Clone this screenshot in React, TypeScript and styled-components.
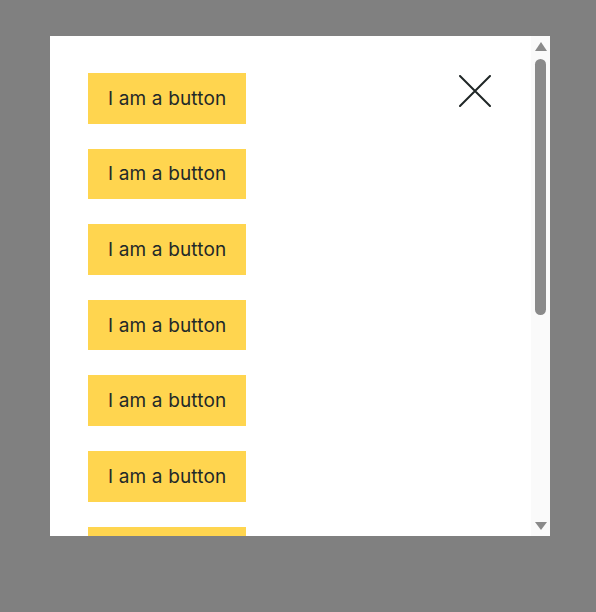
import React from 'react';
import styled, { createGlobalStyle } from 'styled-components';

const GlobalStyle = createGlobalStyle`
  html, body {
    margin: 0;
    padding: 0;
  }
  body {
    font-family: Inter, 'Noto Sans', sans-serif;
  }
`;

const Backdrop = styled.div`
  width: 100%;
  height: 100vh;
  background-color: #808080;
  padding: 36px 0 0 50px;
  box-sizing: border-box;
`;

const Modal = styled.div`
  display: flex;
  width: 500px;
  height: 500px;
  background-color: #fff;
`;

const Body = styled.div`
  position: relative;
  flex: 1;
  overflow: hidden;
`;

const Content = styled.div`
  display: flex;
  flex-direction: column;
  align-items: flex-start;
  gap: 25px;
  padding: 37px 38px;
`;

const Button = styled.button`
  display: flex;
  align-items: center;
  height: 50.6px;
  padding: 0 20px;
  border: none;
  border-radius: 0;
  background-color: #ffd54f;
  color: #1f2929;
  font-family: Inter, 'Noto Sans', sans-serif;
  font-size: 19px;
  letter-spacing: 0.15px;
  cursor: pointer;
`;

const Close = styled.button`
  position: absolute;
  top: 39px;
  left: 409px;
  width: 32px;
  height: 32px;
  padding: 0;
  border: none;
  background: none;
  cursor: pointer;
`;

const ScrollBar = styled.div`
  display: flex;
  flex-direction: column;
  width: 19px;
  background-color: #fafafa;
`;

const Arrow = styled.div<{ $down?: boolean }>`
  display: flex;
  justify-content: center;
  align-items: ${({ $down }) => ($down ? 'flex-start' : 'flex-end')};
  height: 19px;
  padding: ${({ $down }) => ($down ? '5px 0 0 1px' : '0 0 4px 1px')};
  box-sizing: border-box;
`;

const Track = styled.div`
  flex: 1;
  padding: 4px 4px 0 4px;
`;

const Thumb = styled.div`
  height: 256px;
  border-radius: 6px;
  background-color: #8a8a8a;
`;

const items = Array.from({ length: 11 }, (_, i) => i);

const App: React.FC = () => {
  return (
    <>
      <GlobalStyle />
      <Backdrop>
        <Modal>
          <Body>
            <Close aria-label="Close">
              <svg width="32" height="32" viewBox="0 0 32 32">
                <path d="M1 1L31 31M31 1L1 31" stroke="#1f2626" strokeWidth="2" strokeLinecap="round" />
              </svg>
            </Close>
            <Content>
              {items.map((i) => (
                <Button key={i}>I am a button</Button>
              ))}
            </Content>
          </Body>
          <ScrollBar>
            <Arrow>
              <svg width="12" height="9" viewBox="0 0 12 9">
                <path d="M6 0L12 9H0Z" fill="#8a8a8a" />
              </svg>
            </Arrow>
            <Track>
              <Thumb />
            </Track>
            <Arrow $down>
              <svg width="12" height="8" viewBox="0 0 12 8">
                <path d="M0 0H12L6 8Z" fill="#8a8a8a" />
              </svg>
            </Arrow>
          </ScrollBar>
        </Modal>
      </Backdrop>
    </>
  );
};

export default App;
